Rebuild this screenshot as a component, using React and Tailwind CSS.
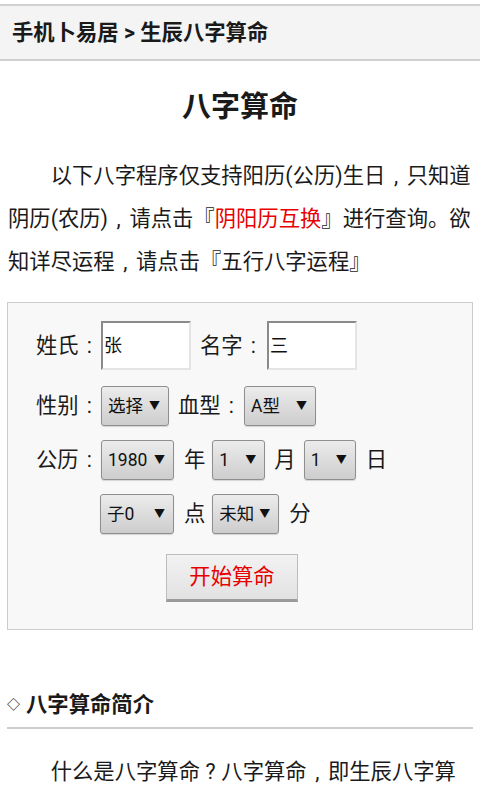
import React from 'react';

const font = { fontFamily: 'Roboto, "Noto Sans CJK SC", sans-serif' };

// full-width punctuation drawn centred in its cell, as in the reference
const P = ({ children }) => <span className="inline-block w-[1em] indent-0 text-center">{children}</span>;

const Select = ({ value, width }) => (
  <div
    className={`flex items-center justify-between h-[40px] ${width} pl-[6px] pr-[8px] rounded-[3px] border border-[#8e8e8e] bg-gradient-to-b from-[#ececec] to-[#cdcdcd] shadow-[0_1px_1px_rgba(0,0,0,0.15)] text-[17.5px] text-[#111]`}
  >
    <span>{value}</span>
    <span className="text-[11px] leading-none">▼</span>
  </div>
);

const TextInput = ({ value }) => (
  <div className="flex items-center w-[90px] h-[49px] bg-white border-2 border-t-[#8a8a8a] border-l-[#8a8a8a] border-r-[#e4e4e4] border-b-[#e4e4e4] pl-[1px] text-[18px] text-[#111]">
    {value}
  </div>
);

const Label = ({ text, className = '' }) => (
  <span className={className}>
    {text}
    <P>:</P>
  </span>
);

export default function App() {
  return (
    <div className="min-h-screen bg-white text-[#1a1a1a] text-[21.33px]" style={font}>
      {/* Breadcrumb */}
      <div className="pt-1">
        <div className="flex items-center h-[57px] px-3 bg-[#f4f4f4] border-y-2 border-[#d0d0d0] font-bold">
          手机卜易居 &gt; 生辰八字算命
        </div>
      </div>

      <h1 className="mt-[26px] text-center text-[29px] leading-[40px] font-bold">八字算命</h1>

      <p className="mt-[27px] px-2 indent-[2em] leading-[43px]">
        以下八字程序仅支持阳历(公历)生日<P>,</P>只知道阴历(农历)<P>,</P>请点击『<span className="text-[#e80000]">阴阳历互换</span>』进行查询。欲知详尽运程<P>,</P>请点击『五行八字运程』
      </p>

      {/* Form */}
      <div className="mt-[19px] mx-[7px] border border-[#cccccc] bg-[#f8f8f8] pt-[18px] pb-[27px] pl-[28px]">
        <div className="flex items-center h-[49px]">
          <Label text="姓氏" className="mr-[1px]" />
          <TextInput value="张" />
          <Label text="名字" className="ml-[9px] mr-[3px]" />
          <TextInput value="三" />
        </div>

        <div className="flex items-center mt-[16px]">
          <Label text="性别" className="mr-[1px]" />
          <Select value="选择" width="w-[68px]" />
          <Label text="血型" className="ml-[9px] mr-[2px]" />
          <Select value="A型" width="w-[72px]" />
        </div>

        <div className="flex items-center mt-[14px]">
          <Label text="公历" className="mr-[1px]" />
          <Select value="1980" width="w-[73px]" />
          <span className="ml-[10px] mr-[7px]">年</span>
          <Select value="1" width="w-[53px]" />
          <span className="ml-[9px] mr-[8px]">月</span>
          <Select value="1" width="w-[52px]" />
          <span className="ml-[10px]">日</span>
        </div>

        <div className="flex items-center mt-[14px] pl-[64px]">
          <Select value="子0" width="w-[74px]" />
          <span className="ml-[10px] mr-[7px]">点</span>
          <Select value="未知" width="w-[67px]" />
          <span className="ml-[10px]">分</span>
        </div>

        <div className="mt-[20px] pl-[130px]">
          <button className="w-[132px] h-[48px] border border-[#bdbdbd] border-b-[3px] border-b-[#9a9a9a] bg-gradient-to-b from-[#f2f2f2] to-[#e2e2e2] text-[#e80000]">
            开始算命
          </button>
        </div>
      </div>

      {/* Intro */}
      <div className="mt-[53px] mx-[7px] border-b-2 border-[#cccccc]">
        <h2 className="flex items-center h-[44px] font-bold">
          <span className="text-[13px] mr-[6px]">◇</span>
          八字算命简介
        </h2>
      </div>
      <p className="mt-[21px] px-2 indent-[2em] leading-[43px]">
        什么是八字算命<P>?</P>八字算命<P>,</P>即生辰八字算命<P>,</P>是根据一个人出生的年、月、日、时，按天干地支排出四柱八字，推算其一生的命运吉凶。
      </p>
    </div>
  );
}
